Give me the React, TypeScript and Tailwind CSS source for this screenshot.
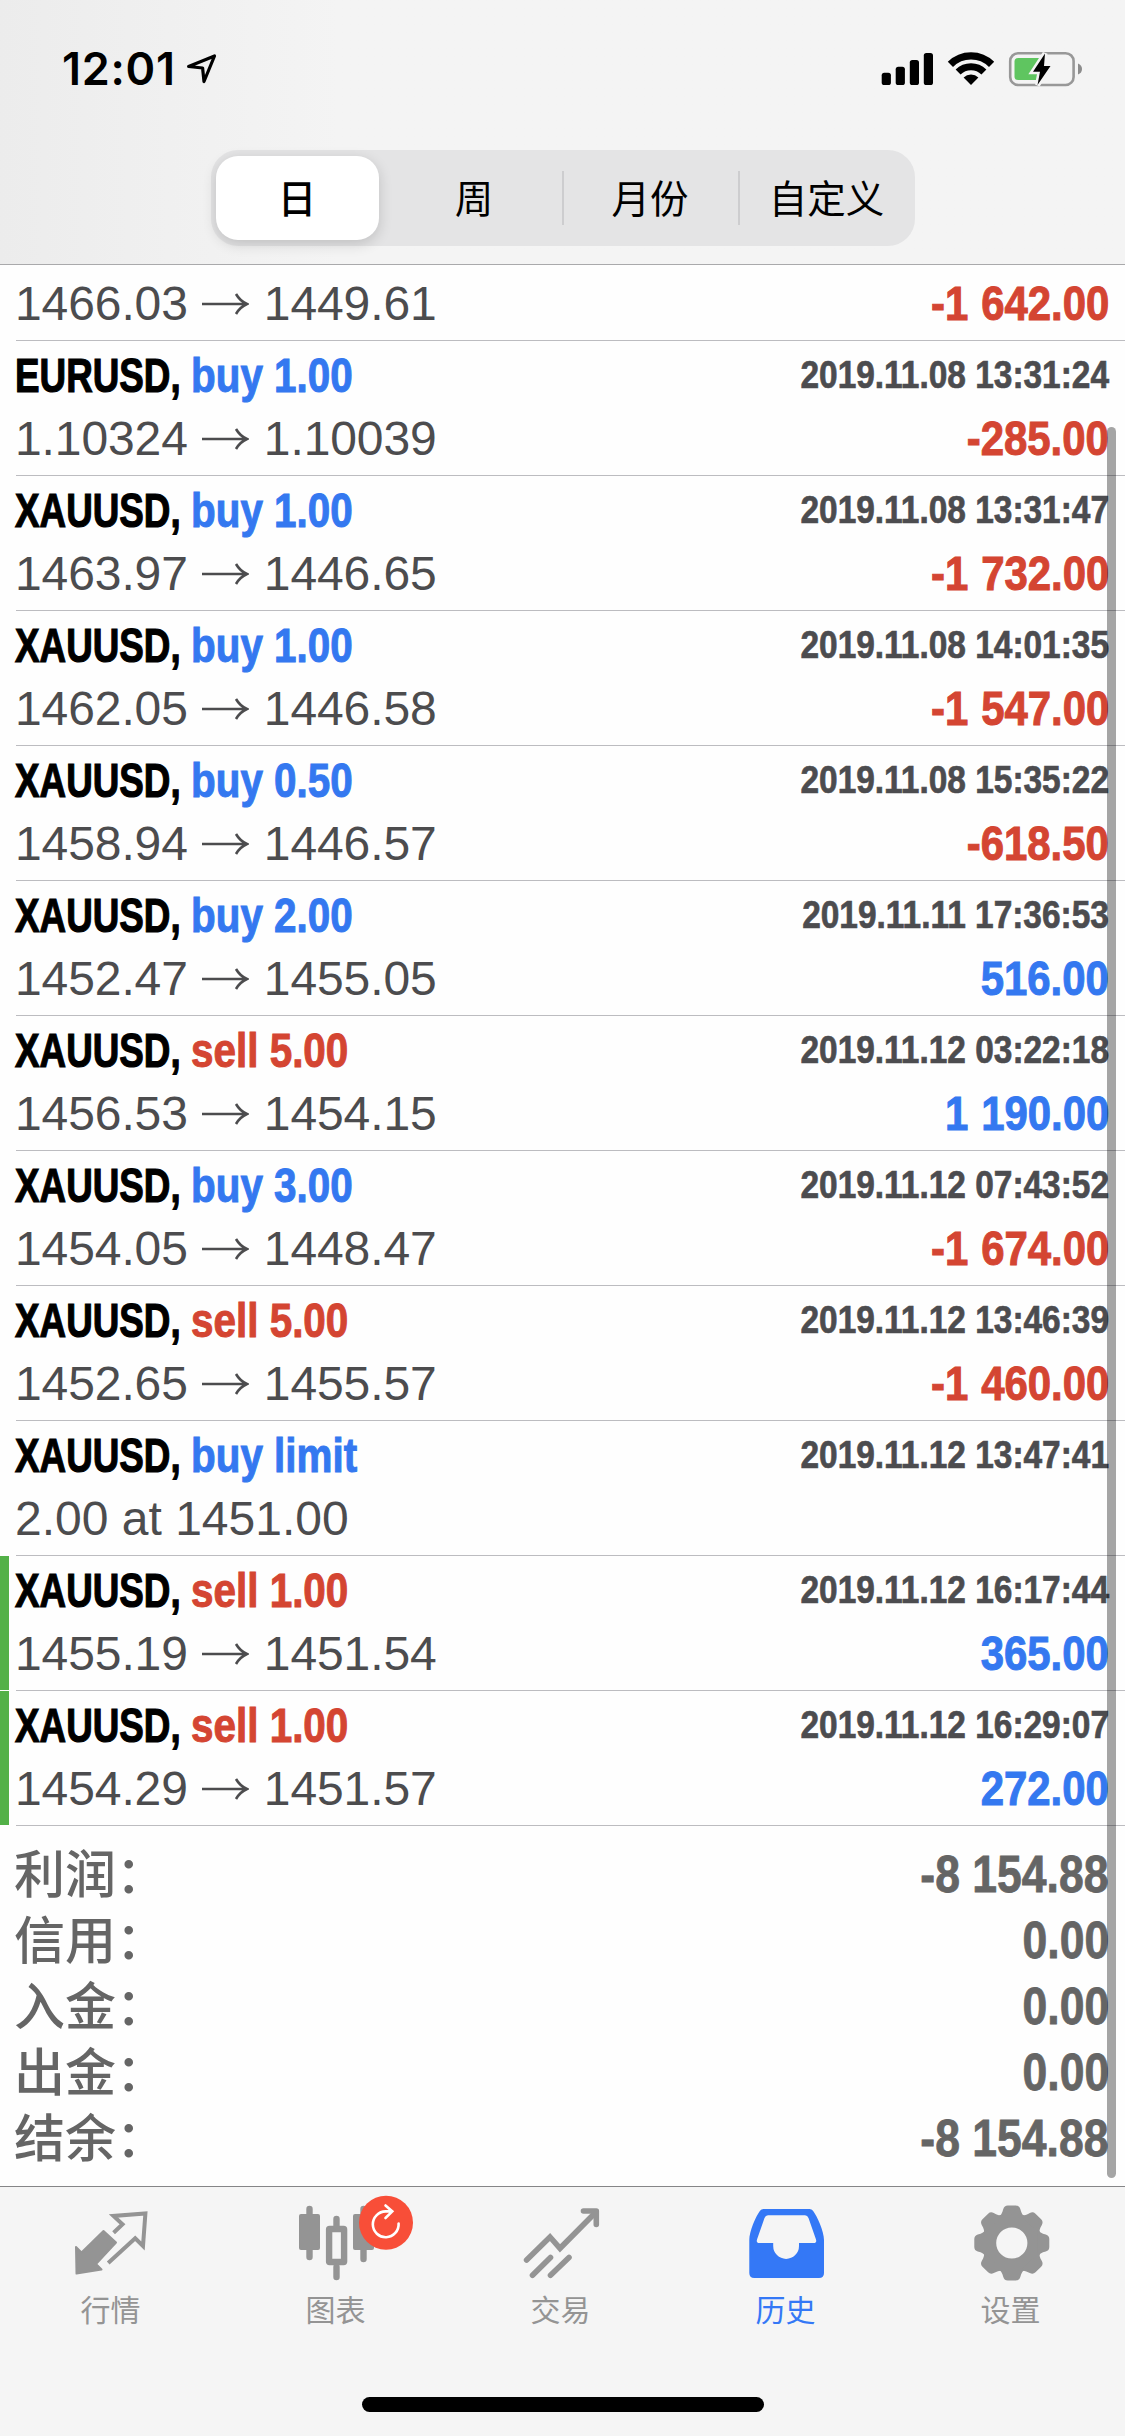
import React, { useState } from 'react';
import clsx from 'clsx';

interface Deal {
  symbol?: string;
  side?: 'buy' | 'sell';
  volume?: string;
  open?: string;
  close?: string;
  note?: string;
  time?: string;
  profit?: string;
  fresh?: boolean;
}

const deals: Deal[] = [
  { open: '1466.03', close: '1449.61', profit: '-1 642.00' },
  { symbol: 'EURUSD', side: 'buy', volume: '1.00', open: '1.10324', close: '1.10039', time: '2019.11.08 13:31:24', profit: '-285.00' },
  { symbol: 'XAUUSD', side: 'buy', volume: '1.00', open: '1463.97', close: '1446.65', time: '2019.11.08 13:31:47', profit: '-1 732.00' },
  { symbol: 'XAUUSD', side: 'buy', volume: '1.00', open: '1462.05', close: '1446.58', time: '2019.11.08 14:01:35', profit: '-1 547.00' },
  { symbol: 'XAUUSD', side: 'buy', volume: '0.50', open: '1458.94', close: '1446.57', time: '2019.11.08 15:35:22', profit: '-618.50' },
  { symbol: 'XAUUSD', side: 'buy', volume: '2.00', open: '1452.47', close: '1455.05', time: '2019.11.11 17:36:53', profit: '516.00' },
  { symbol: 'XAUUSD', side: 'sell', volume: '5.00', open: '1456.53', close: '1454.15', time: '2019.11.12 03:22:18', profit: '1 190.00' },
  { symbol: 'XAUUSD', side: 'buy', volume: '3.00', open: '1454.05', close: '1448.47', time: '2019.11.12 07:43:52', profit: '-1 674.00' },
  { symbol: 'XAUUSD', side: 'sell', volume: '5.00', open: '1452.65', close: '1455.57', time: '2019.11.12 13:46:39', profit: '-1 460.00' },
  { symbol: 'XAUUSD', side: 'buy', volume: 'limit', note: '2.00 at 1451.00', time: '2019.11.12 13:47:41' },
  { symbol: 'XAUUSD', side: 'sell', volume: '1.00', open: '1455.19', close: '1451.54', time: '2019.11.12 16:17:44', profit: '365.00', fresh: true },
  { symbol: 'XAUUSD', side: 'sell', volume: '1.00', open: '1454.29', close: '1451.57', time: '2019.11.12 16:29:07', profit: '272.00', fresh: true },
];

const summary = [
  { label: '利润', value: '-8 154.88' },
  { label: '信用', value: '0.00' },
  { label: '入金', value: '0.00' },
  { label: '出金', value: '0.00' },
  { label: '结余', value: '-8 154.88' },
];

const periods = ['日', '周', '月份', '自定义'];

const StatusBar: React.FC = () => (
  <div className="flex justify-between h-[150px] pt-[30px] pl-[62px] pr-[25px]">
    <div className="flex">
      <span className="w-[123px] pt-[11px] whitespace-nowrap font-['Inter',sans-serif] font-semibold text-[45px] leading-[56px] tracking-[0.7px] text-black">
        12:01
      </span>
      <svg width="34" height="60" viewBox="0 0 34 60" fill="none" stroke="#000" strokeWidth="3.2" strokeLinejoin="round">
        <path d="M3.6 36.5L29.5 26L19 51.5L17.6 38Z" />
      </svg>
    </div>
    <svg width="230" height="80" viewBox="0 0 230 80">
      <rect x="11.7" y="42.7" width="9.2" height="12.3" rx="2.6" />
      <rect x="25.7" y="36.7" width="9.2" height="18.3" rx="2.6" />
      <rect x="39.8" y="30" width="9.2" height="25" rx="2.6" />
      <rect x="53.8" y="23" width="9.2" height="32" rx="2.6" />
      <g fill="none" stroke="#000">
        <path d="M80.4 34.4A29.2 29.2 0 0 1 121.6 34.4" strokeWidth="7.4" />
        <path d="M88.1 42.1A18.3 18.3 0 0 1 113.9 42.1" strokeWidth="7" />
      </g>
      <path d="M101 55L93.6 47.6A10.5 10.5 0 0 1 108.4 47.6Z" />
      <rect x="140.2" y="23.2" width="63.4" height="31.8" rx="8" fill="none" stroke="#989898" strokeWidth="2.6" />
      <path d="M208 33.5Q212 35 212 39T208 44.5Z" fill="#8c8c8c" />
      <path d="M148 28H173L168 50H148Q144.5 50 144.5 46.5V31.5Q144.5 28 148 28Z" fill="#5fc560" />
      <path d="M175 23.5L163 41.7H170L167.5 55L180.5 36H174Z" stroke="#f4f4f4" strokeWidth="5" paintOrder="stroke" />
    </svg>
  </div>
);

const Arrow: React.FC = () => (
  <svg className="ml-[14px] mr-[15px] mt-[17px]" width="47" height="32" viewBox="0 0 47 32" fill="none" stroke="#4c4c4e" strokeWidth="2.6">
    <path d="M0 16H45M34 6Q38 13 45 16Q38 19 34 26" />
  </svg>
);

const DealRow: React.FC<{ deal: Deal }> = ({ deal }) => (
  <li className={clsx('flex', deal.symbol ? 'h-[135px]' : 'h-[76px]')}>
    <div className={clsx('w-[9px] mb-px shrink-0', deal.fresh && 'bg-[#53b148]')} />
    <div className={clsx('ml-[7px] flex-1 border-b border-[#bcbcc0] pr-4', deal.symbol ? 'pt-[5px]' : 'pt-1.5')}>
      {deal.symbol && (
        <div className="flex justify-between h-[60px] whitespace-nowrap font-bold text-[48px] leading-[60px]">
          <div className="flex">
            <span className="w-[176px] origin-left scale-x-[0.767] text-black [-webkit-text-stroke:1.2px_currentColor] -ml-px">
              {deal.symbol},
            </span>
            <span
              className={clsx(
                'origin-left scale-x-[0.842] [-webkit-text-stroke:1px_currentColor]',
                deal.side === 'buy' ? 'text-[#3478f0]' : 'text-[#d44532]'
              )}
            >
              {deal.side} {deal.volume}
            </span>
          </div>
          <span className="origin-right scale-x-[0.857] text-[39px] leading-[58px] text-[#4c4c4f] [-webkit-text-stroke:0.7px_currentColor]">
            {deal.time}
          </span>
        </div>
      )}
      <div className="flex justify-between h-[66px] whitespace-nowrap text-[48px] leading-[66px] text-[#4c4c4e]">
        {deal.note ? (
          <span className="-ml-px">{deal.note}</span>
        ) : (
          <div className="flex -ml-px tracking-[-0.1px]">
            <span>{deal.open}</span>
            <Arrow />
            <span>{deal.close}</span>
          </div>
        )}
        {deal.profit && (
          <span
            className={clsx(
              'origin-right scale-x-[0.873] font-bold [word-spacing:1.5px] [-webkit-text-stroke:1px_currentColor]',
              deal.profit.startsWith('-') ? 'text-[#d44532]' : 'text-[#3478f0]'
            )}
          >
            {deal.profit}
          </span>
        )}
      </div>
    </div>
  </li>
);

const QuotesIcon: React.FC = () => (
  <svg width="90" height="100" viewBox="0 0 90 100" fill="currentColor" stroke="currentColor" strokeLinejoin="round">
    <path d="M10 60L15.5 65.5L37.5 44L50 55.5L30 77L35.5 82.5L10.5 86.5Z" strokeWidth="2" />
    <path d="M47.6 45.7L56.5 37.3L47.5 29L79.4 26.5L77 59L69.2 51.3L42.2 76" fill="none" strokeWidth="4" strokeLinejoin="miter" />
  </svg>
);

const ChartIcon: React.FC = () => (
  <svg className="overflow-visible" width="90" height="100" viewBox="0 0 90 100" stroke="currentColor" strokeLinecap="round" strokeWidth="6.4">
    <rect x="8" y="27" width="21" height="36" rx="2" fill="currentColor" stroke="none" />
    <path d="M18.5 22V70" />
    <rect x="38.1" y="42" width="15" height="33" rx="0.5" fill="none" />
    <path d="M45.5 32V39M45.5 80V90" />
    <rect x="62" y="27" width="21" height="36" rx="2" fill="currentColor" stroke="none" />
    <path d="M72.5 22V72" />
    <circle cx="95" cy="35.7" r="27" fill="#f84e38" stroke="none" />
    <path d="M107.6 36.5A12.9 12.9 0 1 1 94.7 24.4H100.5M94.5 18.5L101.3 24.4L94.5 31" fill="none" stroke="#fff" strokeWidth="2.6" />
  </svg>
);

const TradeIcon: React.FC = () => (
  <svg width="90" height="100" viewBox="0 0 90 100" fill="none" stroke="currentColor" strokeWidth="5.6" strokeLinecap="round">
    <path d="M10.6 73L34 50L44 61.3L79 26" />
    <path d="M67.5 24H80.3V37.5" strokeLinejoin="round" />
    <path d="M16.5 88.3L34.5 70.5M34.5 88.3L53 70.5" />
  </svg>
);

const HistoryIcon: React.FC = () => (
  <svg width="90" height="100" viewBox="0 0 90 100" fill="currentColor" fillRule="evenodd">
    <path d="M8.3 53C8.3 44 15 29 19 23.7Q20.3 22 22.5 22H68.5Q70.7 22 72 23.7C76 29 83 44 83 53V86Q83 91 78 91H13.3Q8.3 91 8.3 86ZM27 28.3Q24.5 28.3 23.5 31L16 52.5Q15 56 18.5 56H32.2V59A12.9 12.9 0 0 0 58 59V56H72.5Q76 56 75 52.5L67.5 31Q66.5 28.3 64 28.3Z" />
  </svg>
);

const SettingsIcon: React.FC = () => (
  <svg width="90" height="100" viewBox="0 0 90 100" fill="currentColor">
    <circle cx="45.8" cy="56" r="22.8" fill="none" stroke="currentColor" strokeWidth="14.4" />
    {[0, 45, 90, 135, 180, 225, 270, 315].map((angle) => (
      <path
        key={angle}
        transform={`rotate(${angle} 45.8 56)`}
        d="M31.800 30C34.800 29 36.300 26 37.300 22Q38.300 18.500 41.800 18.500H49.800Q53.300 18.500 54.300 22C55.300 26 56.800 29 59.800 30Z"
      />
    ))}
  </svg>
);

const tabs = [
  { label: '行情', Icon: QuotesIcon },
  { label: '图表', Icon: ChartIcon },
  { label: '交易', Icon: TradeIcon },
  { label: '历史', Icon: HistoryIcon },
  { label: '设置', Icon: SettingsIcon },
];

const App: React.FC = () => {
  const [period, setPeriod] = useState('日');
  const [activeTab, setActiveTab] = useState('历史');

  return (
    <div className="relative flex flex-col w-[1125px] h-[2436px] overflow-hidden bg-[#fefefe] font-['Liberation_Sans','Noto_Sans_CJK_SC',sans-serif]">
      <header className="h-[265px] shrink-0 border-b border-[#a9a9ab] bg-linear-to-r from-[#ececec] via-[#f4f4f4] via-30% to-[#f4f4f4]">
        <StatusBar />
        {/* Period switch */}
        <div className="flex w-[704px] h-24 mx-auto rounded-[27px] bg-[#e4e4e5] font-['Noto_Sans_CJK_SC',sans-serif] text-[38.5px] text-black">
          {periods.map((item, index) => (
            <button
              key={item}
              onClick={() => setPeriod(item)}
              className="flex w-44 items-center"
            >
              <span
                className={clsx(
                  'flex items-center justify-center pb-0.5',
                  period === item
                    ? 'w-[163px] h-[84px] ml-[5px] rounded-[22px] bg-white font-medium shadow-[0_4px_14px_rgba(0,0,0,0.16)]'
                    : 'flex-1'
                )}
              >
                {item}
              </span>
              {(index === 1 || index === 2) && <span className="-mr-px w-0.5 h-[54px] bg-[#cdcdcf]" />}
            </button>
          ))}
        </div>
      </header>

      {/* Closed deals */}
      <main className="flex-1 overflow-hidden">
        <ul>
          {deals.map((deal, index) => (
            <DealRow key={index} deal={deal} />
          ))}
        </ul>
        <dl className="pt-4 pl-[14px] pr-4">
          {summary.map((row) => (
            <div key={row.label} className="flex items-start justify-between h-[66px] text-[51px] text-[#656565]">
              <dt className="font-['Noto_Sans_CJK_SC',sans-serif] font-medium leading-[58px]">{row.label}：</dt>
              <dd className="origin-right scale-x-[0.873] font-bold leading-[66px] [-webkit-text-stroke:0.8px_currentColor]">{row.value}</dd>
            </div>
          ))}
        </dl>
      </main>

      <nav className="h-[250px] shrink-0 border-t border-[#858587] bg-[#f5f5f5]">
        <div className="flex h-[210px]">
          {tabs.map(({ label, Icon }) => (
            <button
              key={label}
              onClick={() => setActiveTab(label)}
              className={clsx(
                "flex w-[225px] -ml-0.5 mr-0.5 flex-col items-center font-['Noto_Sans_CJK_SC',sans-serif] text-[30px] leading-[42px]",
                activeTab === label ? 'text-[#3478f6]' : 'text-[#949494]'
              )}
            >
              <Icon />
              <span>{label}</span>
            </button>
          ))}
        </div>
        <div className="w-[402px] h-[15px] mx-auto rounded-full bg-black" />
      </nav>

      {/* Scroll indicator */}
      <div className="absolute top-[427px] right-[9px] w-[9px] h-[1751px] rounded-full bg-black/35" />
    </div>
  );
};

export default App;
